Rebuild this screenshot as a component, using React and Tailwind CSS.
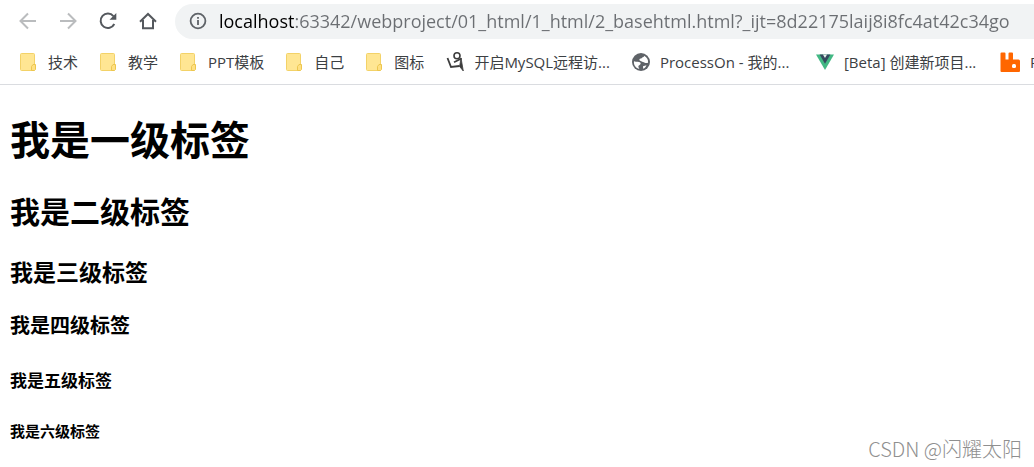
import { useState } from 'react';

const PAGE_URL = 'localhost:63342/webproject/01_html/1_html/2_basehtml.html?_ijt=8d22175laij8i8fc4at42c34go';

function FolderIcon() {
  return (
    <svg viewBox="0 0 18 20" className="w-[18px] h-5 shrink-0" aria-hidden="true">
      <rect x="0.5" y="1.5" width="14" height="17" rx="1" fill="#ffe693" stroke="#f3d268" />
      <path d="M11.5 18.5V14.5L13 12.5H15.5V17.5L14.5 18.5Z" fill="#ffe082" stroke="#ecc64f" />
    </svg>
  );
}

function FigureIcon() {
  return (
    <svg viewBox="0 0 18 20" className="w-[18px] h-5 shrink-0" fill="none" stroke="#3c3c3c" aria-hidden="true">
      <circle cx="11" cy="3.8" r="3" strokeWidth="1.6" />
      <path d="M1.5 6L5 15L13.5 14" strokeWidth="1.8" />
      <path d="M8 10.2L15.5 6.5" strokeWidth="1.6" />
      <path d="M15 6L17.3 19L13.6 14.5Z" fill="#3c3c3c" strokeWidth="0.8" />
    </svg>
  );
}

function GlobeIcon() {
  return (
    <svg viewBox="0 0 18 20" className="w-[18px] h-5 shrink-0" aria-hidden="true">
      <circle cx="9" cy="10" r="9" fill="#5f6368" />
      <path
        d="M2 9.3C4.4 10.2 7 9.3 8.3 10.6C9.4 11.7 8 13.2 6.6 13.7C6 14 6.6 15.5 7.4 17C4 16.4 1.4 13 2 9.3Z"
        fill="#fff"
      />
      <path
        d="M12 3.7C14.8 5 16.3 7.4 16.1 10.4C14.9 11.8 13.4 10.6 12.2 10.4C10.8 10.1 9.6 9.1 8.2 8.7C6.8 8.2 7.2 6.7 8.9 6.5C10.2 6.4 9.8 5.5 10.8 5.2C11.7 5 12.2 4.5 12 3.7Z"
        fill="#fff"
      />
      <path d="M11 14.2L14.5 13.2C13.8 15 12.7 16 11.2 16.7Z" fill="#fff" />
    </svg>
  );
}

function VueIcon() {
  return (
    <svg viewBox="0 0 18 20" className="w-[18px] h-5 shrink-0" aria-hidden="true">
      <path d="M0 2.5H18L9 18Z" fill="#41b883" />
      <path d="M3.6 2.5H14.4L9 11.8Z" fill="#35495e" />
      <path d="M6.9 2.5H11.1L9 6Z" fill="#e6f4ee" />
    </svg>
  );
}

function RabbitIcon() {
  return (
    <svg viewBox="0 0 20 20" className="w-5 h-5 shrink-0" aria-hidden="true">
      <path
        d="M1.5 0.5H4.5Q5.5 0.5 5.5 1.5V7.5H8.5V1.5Q8.5 0.5 9.5 0.5H12Q13 0.5 13 1.5V7.5H18.5Q20 7.5 20 9V19Q20 20 19 20H1.5Q0.5 20 0.5 19V1.5Q0.5 0.5 1.5 0.5Z"
        fill="#ff6600"
      />
      <rect x="12" y="12" width="4" height="4" rx="1.5" fill="#fff" />
    </svg>
  );
}

const folders = ['技术', '教学', 'PPT模板', '自己', '图标'];

const pages = [
  { title: '开启MySQL远程访...', icon: FigureIcon },
  { title: 'ProcessOn - 我的...', icon: GlobeIcon },
  { title: '[Beta] 创建新项目...', icon: VueIcon },
  { title: 'RabbitMQ', icon: RabbitIcon },
];

function Toolbar() {
  const [url, setUrl] = useState(PAGE_URL);

  return (
    <div className="flex items-center h-[42px] pl-4">
      <nav className="flex items-center gap-4 shrink-0">
        <button aria-label="Back" disabled className="w-6 h-6 grid place-items-center">
          <svg viewBox="0 0 18 18" className="w-[18px] h-[18px]" fill="none" stroke="#babcbe" strokeWidth="2">
            <path d="M17 9H2M9 1.5L1.5 9L9 16.5" />
          </svg>
        </button>
        <button aria-label="Forward" disabled className="w-6 h-6 grid place-items-center">
          <svg viewBox="0 0 18 18" className="w-[18px] h-[18px]" fill="none" stroke="#babcbe" strokeWidth="2">
            <path d="M1 9H16M9 1.5L16.5 9L9 16.5" />
          </svg>
        </button>
        <button aria-label="Reload" className="w-6 h-6 grid place-items-center">
          <svg viewBox="0 0 18 18" className="w-[18px] h-[18px]" fill="none" stroke="#54585d" strokeWidth="2">
            <path d="M15.3 12A7.2 7.2 0 1 1 14.4 4.2" />
            <path d="M17.3 1V7.8H10.5Z" fill="#54585d" stroke="none" />
          </svg>
        </button>
        <button aria-label="Home" className="w-6 h-6 grid place-items-center">
          <svg viewBox="0 0 18 18" className="w-[18px] h-[18px]" fill="none" stroke="#54585d" strokeWidth="2">
            <path d="M1 9.7L9 2L17 9.7M4 8V16.3H14V8" />
          </svg>
        </button>
      </nav>

      <div className="flex flex-1 min-w-0 items-center gap-3 h-[35px] ml-[15px] pl-3.5 rounded-l-full bg-[#f1f3f4]">
        <svg viewBox="0 0 18 18" className="w-[18px] h-[18px] shrink-0" fill="none" stroke="#5f6368" aria-hidden="true">
          <circle cx="9" cy="9" r="7.4" strokeWidth="1.8" />
          <path d="M9 8V13M9 5V6.8" strokeWidth="1.8" />
        </svg>
        {/* the host part is darker than the path */}
        <input
          type="text"
          aria-label="Address"
          value={url}
          onChange={(e) => setUrl(e.target.value)}
          className="flex-1 min-w-0 h-8 outline-none text-lg text-transparent caret-black bg-clip-text bg-[linear-gradient(90deg,#000_76px,#6b6e72_76px)]"
        />
      </div>
    </div>
  );
}

function BookmarkBar() {
  return (
    <nav className="flex items-center gap-[22px] h-[43px] pl-5 pb-[3px] overflow-hidden border-b border-[#dadce0] whitespace-nowrap text-[15px] leading-5 text-[#3c4043]">
      {folders.map((title) => (
        <button key={title} className="flex items-center gap-2.5 shrink-0">
          <FolderIcon />
          {title}
        </button>
      ))}
      {pages.map(({ title, icon: Icon }) => (
        <a key={title} href="#" className="flex items-center gap-2.5 shrink-0 min-w-[162px]">
          <Icon />
          {title}
        </a>
      ))}
    </nav>
  );
}

export default function App() {
  return (
    <div className="relative min-h-screen overflow-hidden bg-white font-['Open_Sans','Noto_Sans_CJK_SC',sans-serif]">
      <header>
        <Toolbar />
        <BookmarkBar />
      </header>

      <main className="px-2.5 pt-7 text-black font-bold">
        <h1 className="text-[40px] leading-[54px]">我是一级标签</h1>
        <h2 className="mt-6 text-[30px] leading-[42px]">我是二级标签</h2>
        <h3 className="mt-6 text-[23px] leading-[30px]">我是三级标签</h3>
        <h4 className="mt-6 text-xl leading-[30px]">我是四级标签</h4>
        <h5 className="mt-7 text-[17px] leading-6">我是五级标签</h5>
        <h6 className="mt-7 text-[15px] leading-5">我是六级标签</h6>
      </main>

      <p className="absolute right-3 bottom-1 text-xl leading-7 font-light text-[#8f8f8f] font-['Noto_Sans_CJK_SC',sans-serif]">
        CSDN @闪耀太阳
      </p>
    </div>
  );
}
